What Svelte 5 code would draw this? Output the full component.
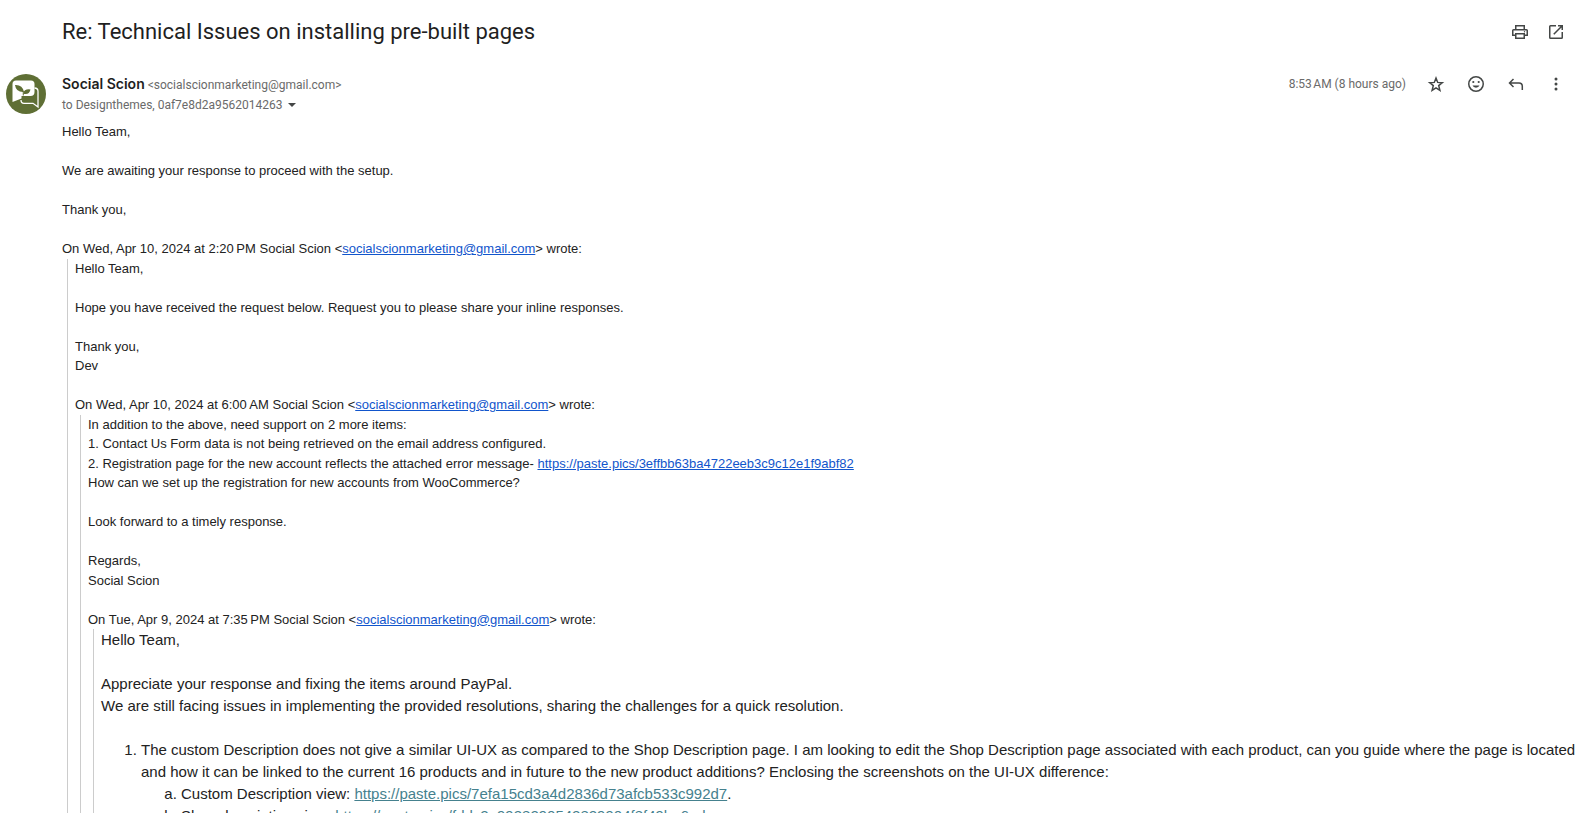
<script lang="ts">
	const email = 'socialscionmarketing@gmail.com';
	const firstPaste = 'https://paste.pics/3effbb63ba4722eeb3c9c12e1f9abf82';
	const customView = 'https://paste.pics/7efa15cd3a4d2836d73afcb533c992d7';
	const shopView = 'https://paste.pics/fddc2e9938290542829904f8f49ba6ed';

	let starred = $state(false);
</script>

{#snippet attribution(when: string)}
	<p>On {when} Social Scion &lt;<a href="mailto:{email}">{email}</a>&gt; wrote:</p>
{/snippet}

<main>
	<header class="subject">
		<h1>Re: Technical Issues on installing pre-built pages</h1>
		<div class="actions">
			<button aria-label="Print all">
				<svg viewBox="0 0 20 20">
					<path fill-rule="evenodd" d="M5 3h10v4h1.5A1.5 1.5 0 0 1 18 8.500V14h-3v3H5v-3H2V8.500A1.500 1.500 0 0 1 3.500 7H5zM6.500 4.500V7h7V4.500zM3.500 8.500v4H5V11h10v1.500h1.500v-4zM6.500 12.500v3h7v-3z" />
					<circle cx="14.500" cy="9.700" r=".7" />
				</svg>
			</button>
			<button aria-label="In new window">
				<svg viewBox="0 0 20 20">
					<path d="M4.500 3H10v1.500H4.500v11h11V10H17v5.500a1.500 1.500 0 0 1-1.500 1.500h-11A1.500 1.500 0 0 1 3 15.500v-11A1.500 1.500 0 0 1 4.500 3zM12 3h5v5h-1.500V5.560l-7.200 7.200-1.060-1.060 7.200-7.200H12z" />
				</svg>
			</button>
		</div>
	</header>

	<article>
		<svg class="avatar" viewBox="0 0 40 40" role="img" aria-label="Social Scion">
			<circle cx="20" cy="20" r="20" fill="#5f6f35" />
			<path d="M10 6.500h15q3.500 0 3.500 3.500v8q0 4-4 4h-9v2.500L6.500 28V10q0-3.500 3.500-3.500z" fill="#fff" />
			<path d="M28.500 14q3.500 0 3.500 3.500V33l-5-3.700h-9q-3 0-3-3.300" fill="none" stroke="#fff" stroke-width="1.300" />
			<path d="M9 11q7.500-.5 9 7-8 .5-9-7zM17 19.500q1.500-5 7.500-4-1.500 6-7.500 4z" fill="#5f6f35" />
			<path d="M16 16q1.800 2 1.300 5.500" fill="none" stroke="#5f6f35" />
		</svg>

		<div class="message">
			<div class="meta">
				<div class="sender">
					<div><strong>Social Scion</strong> <span>&lt;{email}&gt;</span></div>
					<div class="to">
						to Designthemes, 0af7e8d2a9562014263
						<button class="details" aria-label="Show details">
							<svg viewBox="0 0 8 4"><path d="M0 0h8L4 4z" /></svg>
						</button>
					</div>
				</div>
				<div class="actions">
					<time>8:53&#8239;AM (8 hours ago)</time>
					<button aria-label="Star" aria-pressed={starred} onclick={() => (starred = !starred)}>
						<svg viewBox="0 0 20 20">
							<path d="M10 4l1.700 4.400 4.600.3-3.600 2.900 1.200 4.800L10 13.800l-3.900 2.600 1.200-4.800-3.600-2.900 4.600-.3z" fill={starred ? '#f4b400' : 'none'} stroke="#444746" stroke-width="1.500" />
						</svg>
					</button>
					<button aria-label="Add reaction">
						<svg viewBox="0 0 20 20">
							<circle cx="10" cy="10" r="7.250" fill="none" stroke="#444746" stroke-width="1.500" />
							<circle cx="7.300" cy="8" r="1.100" />
							<circle cx="12.700" cy="8" r="1.100" />
							<path d="M6.500 11.500h7a3.700 3.200 0 0 1-7 0z" />
						</svg>
					</button>
					<button aria-label="Reply">
						<svg viewBox="0 0 20 20">
							<path d="M7.500 5L3.500 9l4 4M3.500 9H13q3.300 0 3.300 3.300V16" fill="none" stroke="#444746" stroke-width="1.500" />
						</svg>
					</button>
					<button aria-label="More">
						<svg viewBox="0 0 20 20">
							<circle cx="10" cy="5" r="1.500" />
							<circle cx="10" cy="10" r="1.500" />
							<circle cx="10" cy="15" r="1.500" />
						</svg>
					</button>
				</div>
			</div>

			<div class="body">
				<p>Hello Team,</p>
				<br />
				<p>We are awaiting your response to proceed with the setup.</p>
				<br />
				<p>Thank you,</p>
				<br />
				{@render attribution('Wed, Apr 10, 2024 at 2:20\u202fPM')}
				<blockquote>
					<p>Hello Team,</p>
					<br />
					<p>Hope you have received the request below. Request you to please share your inline responses.</p>
					<br />
					<p>Thank you,</p>
					<p>Dev</p>
					<br />
					{@render attribution('Wed, Apr 10, 2024 at 6:00\u202fAM')}
					<blockquote>
						<p>In addition to the above, need support on 2 more items:</p>
						<p>1. Contact Us Form data is not being retrieved on the email address configured.</p>
						<p>
							2. Registration page for the new account reflects the attached error message-
							<a href={firstPaste}>{firstPaste}</a>
						</p>
						<p>How can we set up the registration for new accounts from WooCommerce?</p>
						<br />
						<p>Look forward to a timely response.</p>
						<br />
						<p>Regards,</p>
						<p>Social Scion</p>
						<br />
						{@render attribution('Tue, Apr 9, 2024 at 7:35\u202fPM')}
						<blockquote class="original">
							<p>Hello Team,</p>
							<br />
							<p>Appreciate your response and fixing the items around PayPal.</p>
							<p>We are still facing issues in implementing the provided resolutions, sharing the challenges for a quick resolution.</p>
							<br />
							<ol>
								<li>
									The custom Description does not give a similar UI-UX as compared to the Shop Description page. I am
									looking to edit the Shop Description page associated with each product, can you guide where the page
									is located and how it can be linked to the current 16 products and in future to the new product
									additions? Enclosing the screenshots on the UI-UX difference:
									<ol type="a">
										<li>Custom Description view: <a href={customView}>{customView}</a>.</li>
										<li>Shop description view: <a href={shopView}>{shopView}</a></li>
									</ol>
								</li>
							</ol>
						</blockquote>
					</blockquote>
				</blockquote>
			</div>
		</div>
	</article>
</main>

<style>
	:global(body) {
		background: #fff;
	}

	main {
		height: 100vh;
		overflow: hidden;
		font-family: 'Liberation Sans', Arial, sans-serif;
		color: #222;
	}

	.subject {
		display: flex;
		justify-content: space-between;
		align-items: center;
		padding: 16px 12px 16px 62px;
	}

	h1 {
		margin: 0;
		font-family: Roboto, sans-serif;
		font-size: 22px;
		font-weight: 400;
		line-height: 32px;
		color: #1f1f1f;
	}

	button {
		display: flex;
		padding: 0;
		border: 0;
		background: none;
		cursor: pointer;
	}

	.actions {
		display: flex;
		align-items: center;
		gap: 20px;
	}

	.subject .actions {
		gap: 16px;
	}

	.actions svg {
		width: 20px;
		height: 20px;
		fill: #444746;
	}

	article {
		display: flex;
		align-items: flex-start;
		gap: 16px;
		padding: 10px 0 0 6px;
	}

	.avatar {
		flex: none;
		width: 40px;
		height: 40px;
	}

	.message {
		flex: 1;
		min-width: 0;
	}

	.meta {
		display: flex;
		justify-content: space-between;
		align-items: flex-start;
		padding-right: 12px;
		font-family: Roboto, sans-serif;
		font-size: 12px;
		line-height: 20px;
		color: #6a6a6a;
	}

	strong {
		font-family: Inter, sans-serif;
		font-size: 14px;
		font-weight: 600;
		color: #1f1f1f;
	}

	.to {
		display: flex;
		align-items: center;
		gap: 6px;
	}

	.details svg {
		width: 8px;
		height: 4px;
		fill: #444746;
	}

	.body {
		margin-top: 7px;
		font-size: 13px;
		line-height: 1.5;
	}

	p {
		margin: 0;
	}

	a {
		color: #15c;
	}

	blockquote {
		margin: 0 0 0 5px;
		padding-left: 7px;
		border-left: 1px solid #ccc;
	}

	.original {
		font-size: 15px;
		line-height: 22px;
	}

	.original a {
		color: #45818e;
	}

	ol {
		margin: 0;
		padding-left: 40px;
	}
</style>
